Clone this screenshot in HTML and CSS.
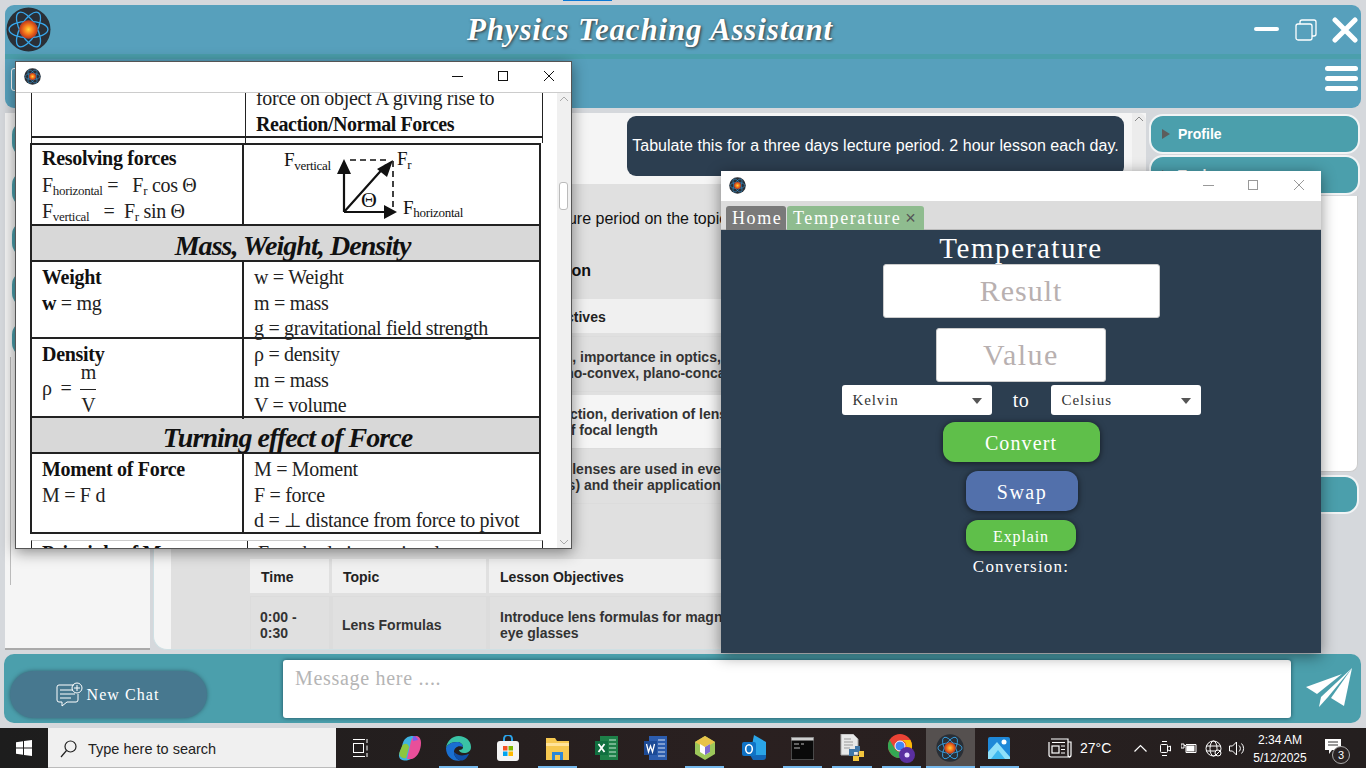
FILE: index.html
```html
<!DOCTYPE html>
<html lang="en">
<head>
    <meta charset="UTF-8" />
    <title>Physics Teaching Assistant</title>
    <link rel="stylesheet" href="styles.css">
</head>
<body>
<svg class="defs" width="0" height="0">
    <defs>
        <radialGradient id="core">
            <stop offset="0" stop-color="#ffd23a"/>
            <stop offset=".5" stop-color="#f6791c"/>
            <stop offset="1" stop-color="#b8341c"/>
        </radialGradient>
        <symbol id="atom" viewBox="0 0 44 44">
            <circle cx="22" cy="22" r="21.5" fill="#2a2f36"/>
            <g fill="none" stroke="#38a6ea" stroke-width="1.3">
                <ellipse cx="22" cy="22" rx="19" ry="8"/>
                <ellipse cx="22" cy="22" rx="19" ry="8" transform="rotate(60 22 22)"/>
                <ellipse cx="22" cy="22" rx="19" ry="8" transform="rotate(120 22 22)"/>
            </g>
            <circle cx="22" cy="22" r="9" fill="url(#core)"/>
        </symbol>
    </defs>
</svg>

<div class="app">
    <!-- top bars -->
    <header class="header">
        <div class="titlebar">
            <svg class="logo"><use href="#atom"/></svg>
            <h1 class="app-title">Physics Teaching Assistant</h1>
            <svg class="ctl-min" width="25" height="4"><rect width="25" height="4" rx="2" fill="#fff"/></svg>
            <svg class="ctl-restore" width="22" height="22" viewBox="0 0 22 22" fill="none" stroke="#fff" stroke-width="1.3">
                <rect x="1" y="5" width="16" height="16" rx="2"/>
                <path d="M5 5V3a2 2 0 0 1 2-2h12a2 2 0 0 1 2 2v12a2 2 0 0 1-2 2h-2"/>
            </svg>
            <svg class="ctl-close" width="26" height="26" viewBox="0 0 26 26" stroke="#fff" stroke-width="5" stroke-linecap="round">
                <path d="M3 3l20 20M23 3L3 23"/>
            </svg>
        </div>
        <div class="toolbar">
            <div class="tool-btn"></div>
            <div class="burger"><span></span><span></span><span></span></div>
        </div>
    </header>

    <main class="main">
        <aside class="sidebar">
            <div class="side-item"></div>
            <div class="side-item"></div>
            <div class="side-item"></div>
            <div class="side-item"></div>
            <div class="side-item"></div>
            <div class="side-list"></div>
        </aside>

        <section class="chat">
            <div class="messages">
                <div class="bubble-user">Tabulate this for a three days lecture period. 2 hour lesson each day.</div>
                <div class="bubble-bot">
                    <p class="intro">Here is a tabulated plan for a three day lecture period on the topic of lenses.</p>
                    <h3 class="day-title">Day 1: Introduction to the Lens Classification</h3>
                    <table class="plan plan-one">
                        <tr><th class="col-time">Time</th><th class="col-topic">Topic</th><th>Lesson Objectives</th></tr>
                        <tr><td>0:00 - 0:30</td><td>What is a Lens</td><td>All lens types, importance in optics,<br>Variants: plano-convex, plano-concave</td></tr>
                        <tr class="light"><td>0:30 - 1:00</td><td>Refraction</td><td>On light refraction, derivation of lens<br>Definitions, of focal length</td></tr>
                        <tr><td>1:00 - 2:00</td><td>Uses</td><td>Show: where lenses are used in everyday life<br>Glasses (eyes) and their applications</td></tr>
                    </table>
                    <h3 class="day-title day-two">Day 2</h3>
                    <table class="plan">
                        <tr><th class="col-time">Time</th><th class="col-topic">Topic</th><th>Lesson Objectives</th></tr>
                        <tr><td>0:00 - 0:30</td><td>Lens Formulas</td><td>Introduce lens formulas for magnification and<br>eye glasses</td></tr>
                    </table>
                </div>
            </div>
            <div class="chat-scroll"><svg width="10" height="6" viewBox="0 0 10 6" fill="none" stroke="#888"><path d="M1 5l4-4 4 4"/></svg></div>
        </section>

        <aside class="rightbar">
            <div class="acc-item"><span class="acc-arrow"></span>Profile</div>
            <div class="acc-item"><span class="acc-arrow"></span>Tools</div>
            <div class="acc-panel"></div>
            <div class="acc-item acc-last"></div>
        </aside>
    </main>

    <footer class="composer">
        <button class="new-chat">
            <svg width="27" height="26" viewBox="0 0 27 26" fill="none" stroke="#fff" stroke-width="1">
                <path d="M18 3H3a2 2 0 0 0-2 2v13a2 2 0 0 0 2 2h3v4l5-4h9a2 2 0 0 0 2-2v-6"/>
                <path d="M4 8h13M4 12h15M4 16h11"/>
                <circle cx="21" cy="6" r="5"/>
                <path d="M21 3v6M18 6h6"/>
            </svg>
            New Chat
        </button>
        <div class="msg-input">Message here ....</div>
        <svg class="send" width="46" height="40" viewBox="0 0 46 40" fill="#fff">
            <path d="M0 19L36 6 11 26z"/>
            <path d="M46 0L15 29l-2 10 9-10z"/>
            <path d="M46 0l-8 38-13-8z"/>
        </svg>
    </footer>
</div>

<!-- taskbar -->
<div class="taskbar">
    <div class="start">
        <svg width="16" height="16" viewBox="0 0 16 16" fill="#fff"><path d="M0 2.2l7-1v6.4H0zM8 1l8-1v7.6H8zM0 8.4h7v6.4l-7-1zM8 8.4h8V16l-8-1z"/></svg>
    </div>
    <div class="search">
        <svg width="17" height="18" viewBox="0 0 17 18" fill="none" stroke="#222" stroke-width="1.2"><circle cx="10.5" cy="6.5" r="5.5"/><path d="M6.5 10.5L1 17"/></svg>
        <span>Type here to search</span>
    </div>
    <div class="slots">
        <div class="slot"><svg width="16" height="20" viewBox="0 0 16 20" fill="none" stroke="#fff"><path d="M0 1.5h12M0 18.500h12"/><rect x=".5" y="5.500" width="10" height="9"/><path d="M14 1v4M14 7.500v5M14 15v4"/></svg></div>
        <div class="slot"><svg width="24" height="26" viewBox="0 0 24 26"><path d="M4 12C5 3 10 1 15 1c3 0 4 2 3 5L13 24c-3 2-11 3-12-3-.5-3 2-6 3-9z" fill="#3fb2e0"/><path d="M9 24L13 6c1-3 3-5 6-5 3 1 4 4 4 7 0 6-3 14-9 16z" fill="#e84f9a"/><path d="M4 11c2-3 6-3 7 1l-3 11C4 24 0 21 2 16z" fill="#8cc63f"/><path d="M15 1c2 0 4 1 5 4l-5 1z" fill="#7a5cf0"/></svg></div>
        <div class="slot on"><svg width="25" height="25" viewBox="0 0 25 25"><path d="M12.500 0C20 0 25 5 25 11c0 4-3 6-7 6-3 0-5-1.500-5-3 3 0 4-1 4-3 0-3-3-5-6-5C5 6 1 9 0 12 1 5 6 0 12.500 0z" fill="#3ac3a5"/><path d="M0 12C1 9 5 6 11 6c3 0 6 2 6 5-5-2-9 1-9 5 0 4 3 8 7 8.500C7 26 0 21 0 12z" fill="#1a6fd0"/><path d="M15 24.500c-4-.5-7-4.500-7-8.500 3 3 7 4 11 3 2-.5 3-1 4-1-2 4-5 7-8 6.500z" fill="#0f4fa8"/></svg></div>
        <div class="slot"><svg width="24" height="26" viewBox="0 0 24 26"><path d="M8 7V4a4 4 0 0 1 8 0v3" fill="none" stroke="#2aa3e8" stroke-width="2"/><rect x="1" y="6" width="22" height="20" rx="3" fill="#f4f4f4"/><rect x="7" y="11" width="4.500" height="4.500" fill="#f25022"/><rect x="12.500" y="11" width="4.500" height="4.500" fill="#7fba00"/><rect x="7" y="16.500" width="4.500" height="4.500" fill="#00a4ef"/><rect x="12.500" y="16.500" width="4.500" height="4.500" fill="#ffb900"/></svg></div>
        <div class="slot on"><svg width="23" height="23" viewBox="0 0 23 23"><path d="M0 1h9l2 3h12v19H0z" fill="#f6c851"/><path d="M0 6h23v3H0z" fill="#ffe39a"/><path d="M6 23v-8h11v8h-3v-5H9v5z" fill="#2a86d8"/></svg></div>
        <div class="slot"><svg width="23" height="24" viewBox="0 0 23 24"><path d="M5 0h18v24H5z" fill="#1d8048"/><path d="M14 4h7M14 8h7M14 12h7M14 16h7M14 20h7" stroke="#c8e8d4"/><path d="M0 5h13v14H0z" fill="#107040"/><path d="M3.500 8l6 8M9.500 8l-6 8" stroke="#fff" stroke-width="1.800"/></svg></div>
        <div class="slot"><svg width="23" height="24" viewBox="0 0 23 24"><path d="M5 0h18v24H5z" fill="#2b5cae"/><path d="M14 4h7M14 8h7M14 12h7M14 16h7M14 20h7" stroke="#d4e0f4"/><path d="M0 5h13v14H0z" fill="#1c4a96"/><path d="M2.500 8l2 8 2-6 2 6 2-8" fill="none" stroke="#fff" stroke-width="1.300"/></svg></div>
        <div class="slot on"><svg width="20" height="24" viewBox="0 0 20 24"><path d="M10 0l10 6v12l-10 6L0 18V6z" fill="#9cc75a"/><path d="M10 0l10 6-10 6L0 6z" fill="#e8c34a"/><path d="M5 8l5 3 5-3v8l-5 3-5-3z" fill="#fff"/><path d="M10 11v8l5-3V8z" fill="#7f6bd0"/></svg></div>
        <div class="slot"><svg width="24" height="26" viewBox="0 0 24 26"><path d="M12 0l12 7v13H8z" fill="#2aa5e8"/><path d="M8 20h16v2a3 3 0 0 1-3 3H11z" fill="#1267b8"/><rect y="7" width="14" height="14" rx="2" fill="#0f72c5"/><ellipse cx="7" cy="14" rx="3.300" ry="4.200" fill="none" stroke="#fff" stroke-width="1.600"/></svg></div>
        <div class="slot on"><svg width="23" height="23" viewBox="0 0 23 23"><rect width="23" height="23" fill="#0a0a0a" stroke="#888"/><rect x=".5" y=".5" width="22" height="3" fill="#cfcfcf"/><path d="M3 7h5M10 7h3M3 11h6" stroke="#bbb"/></svg></div>
        <div class="slot on"><svg width="24" height="28" viewBox="0 0 24 28"><path d="M1 0h12l5 5v16H1z" fill="#e8e8e8" stroke="#aaa"/><path d="M4 5h7M4 8h9M4 11h9M4 14h6" stroke="#999"/><path d="M9 15h6v-3h5v6h-6v4H9z" fill="#3f76a8"/><path d="M24 17v6h-5v4h-6v-5h6v-5z" fill="#f2c53d"/></svg></div>
        <div class="slot on"><svg width="27" height="29" viewBox="0 0 27 29"><circle cx="12" cy="12" r="12" fill="#ea4335"/><path d="M12 24A12 12 0 0 1 1.600 6L7 15a6 6 0 0 0 5 3z" fill="#34a853"/><path d="M12 24l5.500-9A6 6 0 0 0 12 6h10.400A12 12 0 0 1 12 24z" fill="#fbbc05"/><circle cx="12" cy="12" r="5" fill="#4285f4" stroke="#fff"/><circle cx="19" cy="21" r="8" fill="#5a2fa0"/><circle cx="19" cy="21" r="2.500" fill="#e8dcff"/></svg></div>
        <div class="slot on active"><svg class="task-atom"><use href="#atom"/></svg></div>
        <div class="slot on"><svg width="22" height="22" viewBox="0 0 22 22"><rect width="22" height="22" rx="2" fill="#1e88d8"/><path d="M0 22V15L9 5l6 7 7 8v2z" fill="#8fe0fa"/><path d="M3 22l7-9 7 9z" fill="#3fb8ee"/><circle cx="16" cy="5" r="2.500" fill="#fff"/></svg></div>
    </div>
    <div class="tray">
        <svg class="news" width="24" height="20" viewBox="0 0 24 20" fill="none" stroke="#fff" stroke-width="1.200"><path d="M3 1h17v16a2 2 0 0 0 2 2H3a2 2 0 0 1-2-2V4"/><path d="M20 4h3v13a2 2 0 0 1-2 2"/><rect x="4" y="8" width="7" height="7"/><path d="M4 4.500h13M13 8h4M13 11.500h4M13 15h4"/></svg>
        <span class="temp">27°C</span>
        <svg class="t-chev" width="13" height="8" viewBox="0 0 13 8" fill="none" stroke="#fff" stroke-width="1.200"><path d="M.5 7.500l6-6 6 6"/></svg>
        <svg class="t-cam" width="11" height="17" viewBox="0 0 11 17" fill="none" stroke="#fff"><rect x=".5" y="4.500" width="7" height="8" rx="1"/><path d="M8 7l2.500-1v5L8 10M2 1.500h5M2 15.500h5"/></svg>
        <svg class="t-bat" width="16" height="13" viewBox="0 0 16 13" fill="none" stroke="#fff"><path d="M0 2h3v4H0zM3 3.500h2v7h10v-8H5"/><rect x="6" y="4" width="7" height="5" fill="#fff"/></svg>
        <svg class="t-globe" width="17" height="17" viewBox="0 0 17 17" fill="none" stroke="#fff"><circle cx="8.500" cy="8.500" r="7.500"/><ellipse cx="8.500" cy="8.500" rx="3.500" ry="7.500"/><path d="M1 6h15M1 11h15"/><circle cx="13" cy="13" r="3" fill="#221c1c"/><path d="M11 15l4-4"/></svg>
        <svg class="t-vol" width="16" height="15" viewBox="0 0 16 15" fill="none" stroke="#fff"><path d="M.5 5v5h3l4 4V1l-4 4zM10 4.500a4 4 0 0 1 0 6M12.500 2.500a7 7 0 0 1 0 10"/></svg>
        <div class="clock"><span>2:34 AM</span><span>5/12/2025</span></div>
        <div class="notify">
            <svg width="16" height="16" viewBox="0 0 16 16" fill="#fff"><path d="M0 0h16v11H7l-3 4v-4H0z"/><path d="M3 3h10M3 6h10" stroke="#333"/></svg>
            <span class="notify-badge">3</span>
        </div>
    </div>
</div>

<!-- reference sheet window -->
<div class="win win-pdf">
    <div class="win-bar">
        <svg class="win-ico"><use href="#atom"/></svg>
        <svg class="win-ctl" width="102" height="12" viewBox="0 0 102 12" fill="none" stroke="#111">
            <path d="M0 6.500h11"/><rect x="46.500" y="1.500" width="9" height="9"/><path d="M92 1l10 10M102 1L92 11"/>
        </svg>
    </div>
    <div class="pdf-view">
        <div class="pdf-page">
            <div class="sheet-top">
                <div class="cell"></div>
                <div class="cell cell-end">force on object A giving rise to<br><b>Reaction/Normal Forces</b></div>
            </div>
            <div class="sheet-gap"><span></span></div>
            <div class="sheet">
                <div class="row row-res">
                    <div class="cell">
                        <b>Resolving forces</b><br>
                        F<sub>horizontal</sub> = &nbsp; F<sub>r</sub> cos &Theta;<br>
                        F<sub>vertical</sub> &nbsp; = &nbsp;F<sub>r</sub> sin &Theta;
                    </div>
                    <div class="cell cell-fig">
                        <svg width="295" height="81" viewBox="0 0 295 81">
                            <g font-family="Liberation Serif" font-size="19" fill="#111">
                                <text x="40" y="21">F<tspan font-size="13" dy="4">vertical</tspan></text>
                                <text x="153" y="20">F<tspan font-size="13" dy="4">r</tspan></text>
                                <text x="159" y="69">F<tspan font-size="13" dy="3">horizontal</tspan></text>
                                <text x="117" y="62" font-size="22">&Theta;</text>
                            </g>
                            <g fill="none" stroke="#111">
                                <path d="M100 67V22M100 67h42M100 67l42-47" stroke-width="2.200"/>
                                <path d="M106 15h40M149 16v50" stroke-width="1.600" stroke-dasharray="6 4"/>
                            </g>
                            <path d="M93 29l7-15 7 15zM140 60l13 7-13 7zM133 24l16-9-6 17z" fill="#111"/>
                        </svg>
                    </div>
                </div>
                <div class="band band-mass">Mass, Weight, Density</div>
                <div class="row row-text row-weight">
                    <div class="cell"><b>Weight</b><br><b>w</b> = mg</div>
                    <div class="cell">w = Weight<br>m = mass<br>g = gravitational field strength</div>
                </div>
                <div class="row row-text row-density">
                    <div class="cell">
                        <b>Density</b>
                        <div class="frac-line">&rho; = <span class="frac"><span>m</span><span class="frac-b">V</span></span></div>
                    </div>
                    <div class="cell">&rho; = density<br>m = mass<br>V = volume</div>
                </div>
                <div class="band band-turn">Turning effect of Force</div>
                <div class="row row-text row-moment">
                    <div class="cell"><b>Moment of Force</b><br>M = F d</div>
                    <div class="cell">M = Moment<br>F = force<br>d = &perp; distance from force to pivot</div>
                </div>
            </div>
            <div class="sheet-next">
                <div class="cell"><b>Principle of Moments</b></div>
                <div class="cell">For a body in rotational</div>
            </div>
        </div>
        <div class="pdf-scroll">
            <svg width="10" height="6" viewBox="0 0 10 6" fill="none" stroke="#aaa"><path d="M1 5l4-4 4 4"/></svg>
            <div class="pdf-thumb"></div>
            <svg width="10" height="6" viewBox="0 0 10 6" fill="none" stroke="#aaa"><path d="M1 1l4 4 4-4"/></svg>
        </div>
    </div>
</div>

<!-- temperature converter window -->
<div class="win win-temp">
    <div class="win-bar">
        <svg class="win-ico"><use href="#atom"/></svg>
        <svg class="win-ctl win-ctl-gray" width="102" height="12" viewBox="0 0 102 12" fill="none" stroke="#999">
            <path d="M0 6.500h11"/><rect x="45.500" y="1.500" width="9" height="9"/><path d="M91 1l10 10M101 1L91 11"/>
        </svg>
    </div>
    <div class="tabs">
        <div class="tab tab-home">Home</div>
        <div class="tab tab-temp">Temperature<span class="tab-x">&times;</span></div>
    </div>
    <div class="conv">
        <div class="conv-title">Temperature</div>
        <div class="field field-result">Result</div>
        <div class="field field-value">Value</div>
        <div class="unit-row">
            <div class="select">Kelvin</div>
            <span class="unit-to">to</span>
            <div class="select">Celsius</div>
        </div>
        <button class="btn btn-convert">Convert</button>
        <button class="btn btn-swap">Swap</button>
        <button class="btn btn-explain">Explain</button>
        <div class="conv-out">Conversion:</div>
    </div>
</div>
<div class="tab-marker"></div>
</body>
</html>
```

FILE: styles.css
```css
* {
    box-sizing: border-box;
}
html, body {
    height: 100%;
}
body {
    margin: 0;
    width: 1366px;
    height: 768px;
    overflow: hidden;
    position: relative;
    background: #d5d8dc;
    font-family: "Liberation Sans", Arial, sans-serif;
}
.defs {
    position: absolute;
}
.tab-marker {
    position: absolute;
    left: 563px;
    top: 0;
    width: 49px;
    height: 1px;
    background: #0a78d4;
}

/* main app */
.app {
    height: 728px;
    padding: 5px 5px 5px 5px;
    display: flex;
    flex-direction: column;
}
.header {
    height: 103px;
    flex: none;
    background: #57a0bc;
    border-radius: 9px;
}
.titlebar {
    height: 49px;
    display: flex;
    align-items: center;
    position: relative;
    padding-right: 66px;
}
.logo {
    position: absolute;
    left: 1px;
    top: 2px;
    width: 45px;
    height: 45px;
}
.app-title {
    flex: 1;
    margin: 0;
    text-align: center;
    color: #fff;
    font-family: "Liberation Serif", serif;
    font-style: italic;
    font-weight: bold;
    font-size: 31px;
    letter-spacing: 0.85px;
    text-shadow: 1px 1px 3px #333;
}
.ctl-min {
    position: absolute;
    left: 1249px;
    top: 22px;
}
.ctl-restore {
    position: absolute;
    left: 1290px;
    top: 14px;
}
.ctl-close {
    position: absolute;
    left: 1327px;
    top: 12px;
}
.toolbar {
    height: 54px;
    border-top: 5px solid #4b9fac;
    position: relative;
}
.tool-btn {
    position: absolute;
    left: 6px;
    top: 9px;
    width: 30px;
    height: 23px;
    border: 1px solid #fff;
    border-radius: 3px;
}
.burger {
    position: absolute;
    right: 3px;
    top: 7px;
    width: 33px;
}
.burger span {
    display: block;
    height: 5px;
    margin-bottom: 5px;
    background: #fff;
    border-radius: 3px;
}

.main {
    height: 537px;
    flex: none;
    margin-top: 5px;
    display: grid;
    grid-template-columns: 145px 993px 211px;
    column-gap: 3px;
}
.sidebar {
    background: #f5f5f5;
    border-bottom: 2px solid #aaa;
    padding: 8px 0 0 7px;
    overflow: hidden;
}
.side-item {
    height: 36px;
    margin-bottom: 14px;
    background: #4b9fac;
    border-radius: 14px;
}
.side-list {
    margin-left: -2px;
    height: 228px;
    margin-top: -14px;
    border-left: 1px solid #bbb;
}

/* chat */
.chat {
    display: flex;
    background: #f5f5f5;
    border-bottom-left-radius: 14px;
    border-left: 1px solid #cfe0e4;
    border-bottom: 1px solid #cfe0e4;
    overflow: hidden;
}
.messages {
    flex: 1;
    padding: 3px 8px 0 17px;
    min-width: 0;
    overflow: hidden;
    display: flex;
    flex-direction: column;
    align-items: flex-end;
}
.bubble-user {
    width: 497px;
    height: 60px;
    flex: none;
    display: flex;
    align-items: center;
    justify-content: center;
    background: #2c3e50;
    color: #fff;
    font-size: 16px;
    letter-spacing: 0.03px;
    border-radius: 9px;
    white-space: nowrap;
}
.bubble-bot {
    flex: none;
    align-self: stretch;
    margin: 8px -8px 0 0;
    height: 480px;
    padding: 25px 0 0 79px;
    background: #e0e0e0;
    color: #111;
    overflow: hidden;
}
.intro {
    margin: 0 0 0 12px;
    line-height: 20px;
    font-size: 16px;
    white-space: nowrap;
}
.day-title {
    margin: 32px 0 0 -3px;
    font-size: 16px;
    line-height: 20px;
    height: 38px;
    white-space: nowrap;
}
.day-two {
    height: 55px;
    margin: 0;
    padding-top: 16px;
}
.plan {
    border-collapse: separate;
    border-spacing: 0 0;
    width: 880px;
    table-layout: fixed;
    font-size: 14px;
    line-height: 16px;
    color: #333;
    font-weight: bold;
}
.plan th {
    height: 37px;
    text-align: left;
    background: #f0f0f0;
    color: #222;
    border-right: 3px solid #e0e0e0;
    border-bottom: 3px solid #e0e0e0;
    padding: 2px 10px 0 11px;
}
.plan td {
    height: 56px;
    padding: 2px 10px 0 10px;
    border: 1px solid #dcdcdc;
    border-right-width: 3px;
}
.plan td:not(:last-child) {
    padding-left: 9px;
}
.plan .light td {
    background: #f5f5f5;
    border-color: #f5f5f5;
    border-top: 3px solid #e0e0e0;
    border-right-color: #e0e0e0;
}
.col-time {
    width: 82px;
}
.col-topic {
    width: 157px;
}
.plan-one .col-topic {
    width: 139px;
}
.chat-scroll {
    width: 14px;
    flex: none;
    margin-right: 0;
    background: #ececec;
    text-align: center;
    padding-top: 3px;
    border-top-right-radius: 8px;
}
.chat-scroll svg {
    display: block;
    margin: 0 auto;
}

/* right accordion */
.rightbar {
    display: flex;
    flex-direction: column;
    padding-top: 1px;
}
.acc-item {
    height: 40px;
    flex: none;
    background: #4b9fac;
    border: 2px solid #f2f4f5;
    border-radius: 14px;
    color: #fff;
    font-weight: bold;
    font-size: 14px;
    display: flex;
    align-items: center;
    padding-left: 11px;
    margin-bottom: 1px;
}
.acc-arrow {
    width: 0;
    height: 0;
    border-left: 8px solid #5d5d5d;
    border-top: 5px solid transparent;
    border-bottom: 5px solid transparent;
    margin-right: 8px;
}
.acc-panel {
    height: 276px;
    flex: none;
    margin-right: 2px;
    background: #fff;
    border: 1px solid #ccc;
    border-top: 0;
    border-radius: 0 0 8px 8px;
    margin-bottom: 3px;
}
.acc-last {
    height: 39px;
    margin-right: 1px;
}

/* composer */
.composer {
    height: 69px;
    flex: none;
    margin: 4px 0 0 -1px;
    background: #4b9fac;
    border-radius: 10px;
    display: flex;
    position: relative;
}
.new-chat {
    width: 197px;
    height: 47px;
    margin: 17px 0 0 6px;
    flex: none;
    background: #47788f;
    border: 0;
    border-radius: 24px;
    box-shadow: 0 0 4px #34606f;
    color: #fff;
    font-family: "Liberation Serif", serif;
    font-size: 16px;
    letter-spacing: 1.05px;
    display: flex;
    align-items: center;
    justify-content: center;
    gap: 4px;
    padding: 0 2px 0 0;
}
.msg-input {
    width: 1008px;
    height: 58px;
    margin: 6px 0 0 76px;
    flex: none;
    background: #fff;
    border-radius: 3px;
    box-shadow: 0 0 4px #1f4f5c;
    padding: 7px 12px;
    color: #b5b5b5;
    font-family: "Liberation Serif", serif;
    font-size: 20px;
    letter-spacing: 0.7px;
}
.send {
    margin: 14px 0 0 15px;
    flex: none;
}

/* taskbar */
.taskbar {
    height: 40px;
    background: linear-gradient(90deg, #1d1d1d, #2a2020 55%, #241f1f);
    display: flex;
    position: relative;
    color: #fff;
}
.start {
    width: 48px;
    display: flex;
    align-items: center;
    justify-content: center;
}
.search {
    width: 288px;
    background: #f0f0f0;
    color: #222;
    border-bottom: 1px solid #bbb;
    display: flex;
    align-items: center;
    gap: 11px;
    padding: 2px 0 0 12px;
    font-size: 14.5px;
}
.slots {
    display: flex;
}
.slot {
    width: 49.15px;
    height: 40px;
    display: flex;
    align-items: center;
    justify-content: center;
    position: relative;
}
.slot.on::after {
    content: "";
    position: absolute;
    left: 5px;
    right: 5px;
    bottom: 0;
    height: 2px;
    background: #76b9ed;
}
.slot.active {
    background: #55504f;
}
.slot.active::after {
    left: 0;
    right: 0;
}
.task-atom {
    width: 28px;
    height: 28px;
}
.tray {
    flex: 1;
    position: relative;
}
.tray > * {
    position: absolute;
}
.news {
    left: 24px;
    top: 10px;
}
.temp {
    left: 56px;
    top: 12px;
    font-size: 14px;
}
.t-chev {
    left: 110px;
    top: 16px;
}
.t-cam {
    left: 136px;
    top: 12px;
}
.t-bat {
    left: 157px;
    top: 14px;
}
.t-globe {
    left: 181px;
    top: 12px;
}
.t-vol {
    left: 205px;
    top: 13px;
}
.clock {
    left: 216px;
    top: 3px;
    width: 80px;
    font-size: 12px;
    line-height: 18px;
    text-align: center;
}
.clock span {
    display: block;
}
.notify {
    left: 301px;
    top: 11px;
}
.notify-badge {
    position: absolute;
    left: 7px;
    top: 7px;
    width: 18px;
    height: 18px;
    border-radius: 50%;
    background: #2a2323;
    border: 1px solid #aaa;
    font-size: 11px;
    line-height: 16px;
    text-align: center;
}

/* floating windows */
.win {
    position: absolute;
    background: #fff;
    box-shadow: 0 3px 14px rgba(0, 0, 0, 0.45);
}
.win-bar {
    height: 30px;
    background: #fff;
    display: flex;
    align-items: center;
    justify-content: space-between;
    padding: 0 17px 2px 8px;
}
.win-ico {
    width: 17px;
    height: 17px;
}

.win-pdf {
    left: 15px;
    top: 61px;
    width: 557px;
    height: 488px;
    border: 1px solid #555;
}
.pdf-view {
    height: 456px;
    border-top: 1px solid #ccc;
    display: flex;
}
.pdf-page {
    flex: 1;
    padding-left: 14px;
    overflow: hidden;
    background: #fff;
    font-family: "Liberation Serif", serif;
    font-size: 20px;
    line-height: 25.500px;
    letter-spacing: -0.3px;
    color: #222;
}
.pdf-page b {
    color: #111;
}
.pdf-page sub {
    font-size: 13px;
    line-height: 0;
    vertical-align: -3px;
}
.pdf-scroll {
    width: 14px;
    flex: none;
    background: #f0f0f0;
    position: relative;
    display: flex;
    flex-direction: column;
    align-items: center;
    justify-content: space-between;
    padding: 3px 0;
}
.pdf-thumb {
    position: absolute;
    left: 2px;
    top: 89px;
    width: 9px;
    height: 28px;
    background: #fff;
    border: 1px solid #bbb;
    border-radius: 3px;
}
.sheet-top {
    display: grid;
    grid-template-columns: 213px 298px;
    height: 45px;
    width: 512px;
    margin-left: 1px;
    border-left: 1px solid #222;
    border-right: 1px solid #222;
    border-bottom: 2px solid #222;
}
.sheet-top .cell {
    height: 43px;
}
.cell {
    padding: 0 0 0 10px;
}
.sheet-top .cell + .cell {
    border-left: 1px solid #222;
}
.cell-end {
    display: flex;
    flex-direction: column;
    justify-content: flex-end;
    overflow: hidden;
    padding-top: 1px;
    margin-bottom: -1px;
}
.sheet-top .cell-end {
    height: 44px;
}
.cell-end b {
    display: block;
    letter-spacing: -0.45px;
}
.sheet-gap {
    height: 5px;
    width: 512px;
    margin-left: 1px;
    border-left: 1px solid #222;
    border-right: 1px solid #222;
    position: relative;
}
.sheet-gap span {
    display: block;
    width: 1px;
    height: 5px;
    margin-left: 213px;
    background: #222;
}
.sheet {
    width: 511px;
    border: 2px solid #222;
    border-bottom-width: 2px;
}
.row {
    display: grid;
    grid-template-columns: 210px 1fr;
    border-bottom: 2px solid #222;
}
.row:last-child {
    border-bottom: 0;
}
.row .cell + .cell {
    border-left: 2px solid #222;
}
.row-res {
    height: 81px;
}
.row-res .cell {
    line-height: 26.5px;
}
.row-text .cell {
    padding-top: 3px;
}
.row .cell-fig {
    padding: 0;
}
.cell-fig svg {
    display: block;
}
.row-weight {
    height: 77px;
}
.row-density {
    height: 79px;
}
.row-moment {
    height: 78px;
}
.band {
    background: #d8d8d8;
    text-align: center;
    border-bottom: 2px solid #222;
    font-style: italic;
    font-weight: bold;
    font-size: 28px;
    color: #111;
}
.band-mass {
    height: 36px;
    line-height: 40px;
    letter-spacing: -0.95px;
    padding-left: 14px;
}
.band-turn {
    height: 36px;
    line-height: 40px;
    letter-spacing: -0.95px;
    padding-left: 4px;
}
.frac-line {
    display: flex;
    align-items: center;
    gap: 9px;
    word-spacing: 4px;
    margin-top: -7.5px;
}
.frac {
    display: flex;
    flex-direction: column;
    align-items: center;
    line-height: 24px;
    width: 16px;
}
.frac-b {
    border-top: 1px solid #222;
    width: 100%;
    text-align: center;
    margin-top: 5px;
    padding-top: 3px;
}
.sheet-next {
    display: grid;
    grid-template-columns: 215px 296px;
    width: 512px;
    margin: 6px 0 0 1px;
    border: 1px solid #222;
    border-top-color: #ccc;
    height: 30px;
    overflow: hidden;
}
.sheet-next .cell + .cell {
    border-left: 1px solid #222;
}

.win-temp {
    left: 721px;
    top: 171px;
    width: 600px;
    height: 482px;
}
.win-ctl-gray {
    margin-right: -1px;
}
.tabs {
    height: 29px;
    background: #dcdcdc;
    border-bottom: 1px solid #bbb;
    padding: 5px 0 0 5px;
    display: flex;
    gap: 1px;
    font-family: "Liberation Serif", serif;
    font-size: 18px;
    letter-spacing: 1.6px;
    color: #fff;
}
.tab {
    height: 24px;
    line-height: 25px;
    padding: 0 6px;
    border-radius: 3px 3px 0 0;
}
.tab-home {
    background: #7a7a7a;
    width: 60px;
}
.tab-temp {
    background: #8fbc8f;
    width: 137px;
    white-space: nowrap;
}
.tab-x {
    margin-left: 4px;
    color: #555;
    font-family: "Liberation Sans", sans-serif;
    font-size: 18px;
    letter-spacing: 0;
}
.conv {
    height: 423px;
    background: #2c3e50;
    display: flex;
    flex-direction: column;
    align-items: center;
    color: #fff;
    font-family: "Liberation Serif", serif;
}
.conv-title {
    height: 34px;
    line-height: 36px;
    font-size: 29px;
    letter-spacing: 1.6px;
}
.field {
    height: 54px;
    background: #fff;
    border: 1px solid #ccc;
    border-radius: 3px;
    color: #b8b0b0;
    font-size: 30px;
    letter-spacing: 1px;
    line-height: 52px;
    text-align: center;
}
.field-result {
    width: 277px;
    margin-bottom: 10px;
}
.field-value {
    width: 170px;
    margin-bottom: 3px;
    letter-spacing: 1.5px;
}
.unit-row {
    display: flex;
    align-items: center;
    margin-bottom: 7px;
}
.select {
    width: 150px;
    height: 30px;
    line-height: 30px;
    padding-left: 11px;
    background: #fff;
    border-radius: 3px;
    color: #333;
    font-size: 15px;
    letter-spacing: 0.9px;
    position: relative;
}
.select::after {
    content: "";
    position: absolute;
    right: 10px;
    top: 13px;
    border-top: 6px solid #555;
    border-left: 5px solid transparent;
    border-right: 5px solid transparent;
}
.unit-to {
    width: 59px;
    text-align: center;
    font-size: 20px;
    letter-spacing: 0.5px;
}
.btn {
    border: 0;
    color: #fff;
    font-family: "Liberation Serif", serif;
    border-radius: 12px;
    box-shadow: 0 1px 6px rgba(0, 0, 0, 0.6);
    padding: 2px 0 0 0;
}
.btn-convert {
    width: 157px;
    height: 40px;
    background: #5fbf4a;
    font-size: 20px;
    letter-spacing: 1.1px;
    margin-bottom: 9px;
}
.btn-swap {
    width: 112px;
    height: 40px;
    margin-left: 2px;
    background: #5270ab;
    font-size: 20px;
    letter-spacing: 1.5px;
    margin-bottom: 9px;
}
.btn-explain {
    width: 110px;
    height: 31px;
    background: #5fbf4a;
    font-size: 16px;
    letter-spacing: 0.9px;
}
.conv-out {
    margin-top: 5px;
    font-size: 17px;
    letter-spacing: 1.2px;
    line-height: 22px;
}
```
